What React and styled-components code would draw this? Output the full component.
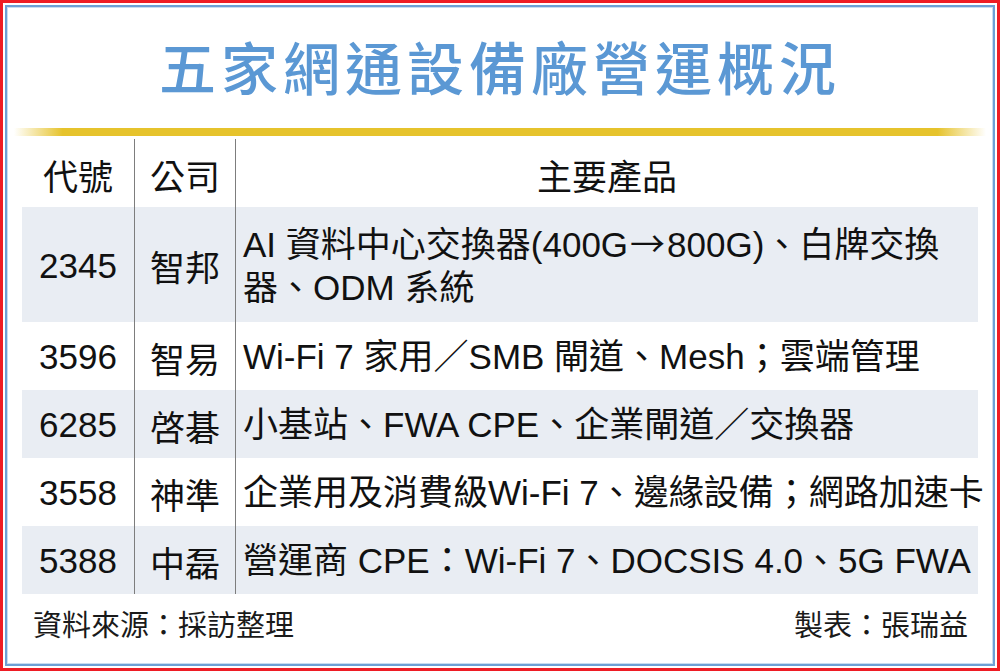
import React from "react";
import styled, { createGlobalStyle } from "styled-components";

const GlobalStyle = createGlobalStyle`
  html, body {
    margin: 0;
    padding: 0;
    background: #ffffff;
  }
  body {
    font-family: "Liberation Sans", "Noto Sans CJK TC", sans-serif;
    color: #111111;
  }
`;

const rows = [
  { code: "2345", company: "智邦", product: ["AI 資料中心交換器(400G→800G)、白牌交換", "器、ODM 系統"], shaded: true },
  { code: "3596", company: "智易", product: ["Wi-Fi 7 家用／SMB 閘道、Mesh；雲端管理"], shaded: false },
  { code: "6285", company: "啓碁", product: ["小基站、FWA CPE、企業閘道／交換器"], shaded: true },
  { code: "3558", company: "神準", product: ["企業用及消費級Wi-Fi 7、邊緣設備；網路加速卡"], shaded: false },
  { code: "5388", company: "中磊", product: ["營運商 CPE：Wi-Fi 7、DOCSIS 4.0、5G FWA"], shaded: true },
];

// the arrow in the source is drawn full width, so give it its own span
const renderLine = (line) => {
  const parts = line.split("→");
  return parts.map((p, i) => (
    <React.Fragment key={i}>
      {i > 0 && <Arrow>→</Arrow>}
      {p}
    </React.Fragment>
  ));
};

const App = () => {
  return (
    <>
      <GlobalStyle />
      <OuterFrame>
        <InnerFrame>
          <Title>五家網通設備廠營運概況</Title>
          <GoldBar />
          <Table>
            <Row>
              <Cell>代號</Cell>
              <Cell>公司</Cell>
              <Cell $last>主要產品</Cell>
            </Row>
            {rows.map((r) => (
              <Row key={r.code} $shaded={r.shaded} $tall={r.product.length > 1}>
                <Cell>{r.code}</Cell>
                <Cell>{r.company}</Cell>
                <ProductCell>
                  {r.product.map((line, i) => (
                    <ProductLine key={i}>{renderLine(line)}</ProductLine>
                  ))}
                </ProductCell>
              </Row>
            ))}
          </Table>
          <Footer>
            <span>資料來源：採訪整理</span>
            <span>製表：張瑞益</span>
          </Footer>
        </InnerFrame>
      </OuterFrame>
    </>
  );
};

const OuterFrame = styled.div`
  width: 1000px;
  height: 671px;
  box-sizing: border-box;
  border: 3px solid #ee1c24;
  padding: 2px;
  background: #ffffff;
`;

const InnerFrame = styled.div`
  height: 100%;
  box-sizing: border-box;
  border: 2px solid #6d9fd4;
  box-shadow: inset 0 0 0 1px #c9dcf0;
  display: flex;
  flex-direction: column;
  padding: 0 15px;
`;

const Title = styled.h1`
  margin: 0;
  height: 121px;
  display: flex;
  align-items: center;
  justify-content: center;
  padding-bottom: 6px;
  box-sizing: border-box;
  font-family: "Noto Sans CJK TC", sans-serif;
  font-weight: 500;
  font-size: 57px;
  letter-spacing: 5px;
  color: #5b98d4;
`;

const GoldBar = styled.div`
  height: 8px;
  margin: 0 -8px;
  background: linear-gradient(
    to right,
    rgba(232, 196, 40, 0) 0%,
    #e6c32c 5%,
    #e6c32c 95%,
    rgba(232, 196, 40, 0) 100%
  );
`;

const Table = styled.div`
  margin-top: 3px;
  display: flex;
  flex-direction: column;
`;

const Row = styled.div`
  display: grid;
  grid-template-columns: 113px 101px 1fr;
  height: ${({ $tall }) => ($tall ? "115px" : "68px")};
  background: ${({ $shaded }) => ($shaded ? "#e9edf3" : "transparent")};
  font-size: 35px;
`;

const Cell = styled.div`
  display: flex;
  align-items: center;
  justify-content: center;
  border-right: ${({ $last }) => ($last ? "none" : "1px solid #7d7d7d")};
  padding-top: 2px;
`;

const ProductCell = styled.div`
  display: flex;
  flex-direction: column;
  justify-content: center;
  padding-left: 7px;
  line-height: 43px;
  white-space: nowrap;
`;

const ProductLine = styled.div``;

const Arrow = styled.span`
  font-family: "Noto Sans CJK TC", sans-serif;
  margin: 0 2px;
`;

const Footer = styled.div`
  display: flex;
  justify-content: space-between;
  padding: 8px 10px 0 11px;
  font-size: 29px;
  color: #1a1a1a;
`;

export default App;
